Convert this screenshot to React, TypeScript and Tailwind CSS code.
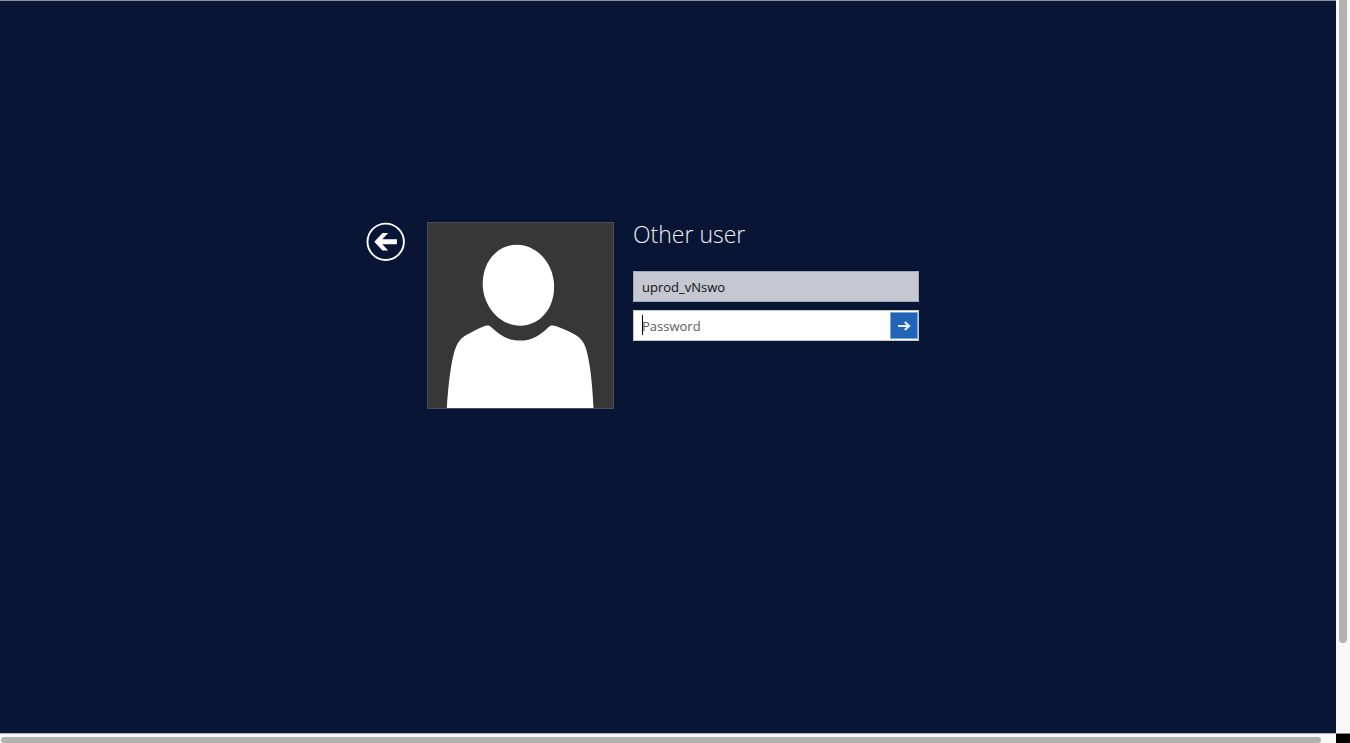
import React, { useState } from "react";

function BackButton() {
  return (
    <button type="button" aria-label="Back" className="h-10 w-10 shrink-0">
      <svg viewBox="0 0 40 40" className="h-10 w-10" aria-hidden="true">
        <circle cx="19.7" cy="19.8" r="18.2" fill="none" stroke="#fff" strokeWidth="1.9" />
        <path
          d="M8.3 19.8 L16.5 11 H22.2 L16.3 17.3 H30.9 V22.3 H16.3 L22.2 28.6 H16.5 Z"
          fill="#fff"
        />
      </svg>
    </button>
  );
}

function Avatar() {
  return (
    <div className="h-[187px] w-[187px] shrink-0 border border-[#4c4e52] bg-[#373737]">
      <svg viewBox="0 0 186 186" className="block h-full w-full" aria-hidden="true">
        <path
          d="M89.5 21.8 C109.5 21.8 126.8 41 126.8 64 C126.8 87 111.5 103.2 92.5 103.2 C72 103.2 55 83.5 55 61 C55 38.5 70 21.8 89.5 21.8 Z"
          fill="#fff"
        />
        <path
          d="M19 186 C20.5 162 23.5 135 28.5 124 C31 118.3 34 115 39 112.3 C44 109.5 50 106.2 55 104.2 C59 102.8 61.5 102.6 64 105 C72 112.5 80 118.2 92.5 118.2 C104.5 118.2 113 112.5 120.5 105.2 C123 102.6 125.5 102.7 129 103.9 C135 106 142 109 148 112.3 C153 115 156 119 158 124 C162.5 136 165.4 162 166.4 186 Z"
          fill="#fff"
        />
      </svg>
    </div>
  );
}

function LoginForm() {
  const [username, setUsername] = useState("uprod_vNswo");
  const [password, setPassword] = useState("");

  return (
    <form className="flex w-[286px] flex-col" onSubmit={(e) => e.preventDefault()}>
      <h1 className="-mt-1 mb-[21px] text-[23px] leading-8 font-light text-[#eef0f5]">Other user</h1>
      <input
        type="text"
        aria-label="User name"
        value={username}
        onChange={(e) => setUsername(e.target.value)}
        className="mb-2 h-[31px] w-full border border-[#a4a8b9] bg-[#c5c8d1] px-2 text-[13px] text-[#101010] outline-none"
      />
      <div className="relative flex h-[31px] items-center border border-[#c3c7d6] bg-white">
        <input
          type="password"
          aria-label="Password"
          placeholder="Password"
          value={password}
          onChange={(e) => setPassword(e.target.value)}
          className="h-full min-w-0 flex-1 bg-transparent px-2 text-[13px] text-[#101010] outline-none placeholder:text-[#5c5c5c]"
        />
        <span aria-hidden="true" className="absolute top-1 left-2 h-5 w-px bg-black" />
        <button
          type="submit"
          aria-label="Submit"
          className="flex h-[27px] w-7 items-center justify-center border border-[#7ea7d6] bg-[#2164b7]"
        >
          <svg viewBox="0 0 14 12" className="h-3 w-3.5" fill="none" stroke="#e8f1fb" strokeWidth="2.2" aria-hidden="true">
            <path d="M1 6 H12 M7.8 2 L12 6 L7.8 10" />
          </svg>
        </button>
      </div>
    </form>
  );
}

export default function App() {
  return (
    <div className="grid h-screen grid-cols-[1fr_14px] grid-rows-[1fr_10px] bg-[#f8f8f9] font-['Open_Sans','Noto_Sans',sans-serif]">
      <main className="flex items-start justify-center border-t border-[#8a90a0] bg-[#081534] pt-[221px] pr-[51px]">
        <BackButton />
        <div className="mr-[19px] ml-[21px]">
          <Avatar />
        </div>
        <LoginForm />
      </main>
      <div className="flex justify-center" aria-hidden="true">
        <div className="h-[643px] w-2 rounded-b-full bg-[#b2b2b2]" />
      </div>
      <div className="flex items-end border-t border-[#b5b7c5] pr-[15px] pl-px" aria-hidden="true">
        <div className="h-1.5 w-full rounded-full bg-[#b2b2b2]" />
      </div>
      <div className="border-t border-[#8c8c8c] bg-black" />
    </div>
  );
}
